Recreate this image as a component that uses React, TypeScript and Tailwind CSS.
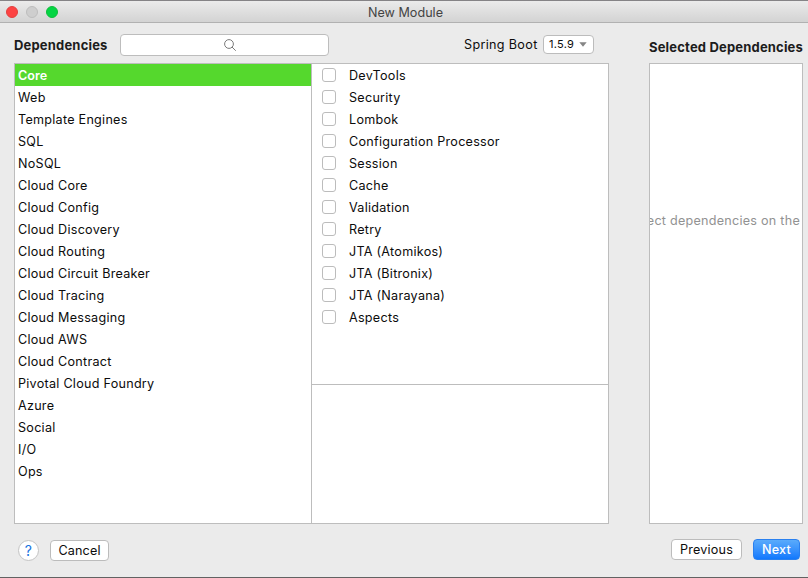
import React from "react";

const categories = [
  "Core", "Web", "Template Engines", "SQL", "NoSQL", "Cloud Core", "Cloud Config",
  "Cloud Discovery", "Cloud Routing", "Cloud Circuit Breaker", "Cloud Tracing",
  "Cloud Messaging", "Cloud AWS", "Cloud Contract", "Pivotal Cloud Foundry",
  "Azure", "Social", "I/O", "Ops",
];

const dependencies = [
  "DevTools", "Security", "Lombok", "Configuration Processor", "Session", "Cache",
  "Validation", "Retry", "JTA (Atomikos)", "JTA (Bitronix)", "JTA (Narayana)", "Aspects",
];

function TitleBar() {
  return (
    <header className="relative flex h-[23px] shrink-0 items-center border-t border-b border-t-[#858386] border-b-[#b1b1b1] bg-linear-to-b from-[#ebebeb] to-[#d3d3d3] pl-1.5">
      <div className="flex gap-2">
        <span className="size-3 rounded-full border border-[#e2413f] bg-[#fd4343]" />
        <span className="size-3 rounded-full border border-[#bdbdbd] bg-[#cecece]" />
        <span className="size-3 rounded-full border border-[#0fbe3b] bg-[#05d544]" />
      </div>
      <h1 className="absolute inset-x-0 pt-0.5 pl-[3px] text-center leading-[22px] tracking-[0.02px] text-[#444]">New Module</h1>
    </header>
  );
}

function SearchField() {
  return (
    <div className="flex h-[22px] w-[209px] items-center justify-center rounded-[4px] border border-[#bdbdbd] bg-white pl-[11px]">
      <svg width="12" height="12" viewBox="0 0 12 12" fill="none" stroke="#7b7b7b" strokeWidth="1">
        <circle cx="5" cy="5" r="4.4" />
        <path d="M8.2 8.2 11.5 11.5" strokeLinecap="round" />
      </svg>
    </div>
  );
}

export default function App() {
  return (
    <div className="flex h-[578px] w-[808px] flex-col overflow-hidden border-b border-[#626262] bg-[#ebebeb] font-['Inter',sans-serif] text-[12.6px] tracking-[0.26px] whitespace-nowrap text-[#0c0c0c]">
      <TitleBar />
      <main className="flex h-[501px] shrink-0">
        <section className="ml-[14px] w-[595px]">
          <div className="flex h-10 items-center">
            <h2 className="w-[106px] pt-[5px] text-[13px] font-bold tracking-[0.18px] text-[#1c1c1c]">Dependencies</h2>
            <div className="pt-1"><SearchField /></div>
            <label className="ml-[135px] w-[79px] pt-[5px] tracking-[0.33px]">Spring Boot</label>
            <button className="mt-[3px] flex h-[19px] w-[51px] items-center justify-between rounded-[4px] border border-[#bcbcbc] bg-white pr-[6px] pl-[5px] text-[11px]">
              1.5.9
              <svg width="8" height="5" viewBox="0 0 8 5"><path d="M.3.3h7.4L4 4.8z" fill="#858585" /></svg>
            </button>
          </div>
          <div className="flex h-[461px] border border-[#bdbdbd] bg-white">
            <ul className="w-[296px]">
              {categories.map((name, i) => (
                <li key={name} className={i === 0 ? "h-[22px] bg-[#55d82d] pl-[3px] leading-[23px] font-semibold tracking-[0.05px] text-white" : "h-[22px] pl-[3px] leading-[23px]"}>
                  {name}
                </li>
              ))}
            </ul>
            <div className="flex flex-1 flex-col border-l border-[#bdbdbd]">
              <ul className="h-[320px]">
                {dependencies.map((name) => (
                  <li key={name} className="flex h-[22px] gap-[13px] pl-[10px] leading-[23px]">
                    <span className="mt-1 size-[14px] rounded-[3px] border border-[#bcbcbc] bg-white" />
                    {name}
                  </li>
                ))}
              </ul>
              <div className="flex-1 border-t border-[#bdbdbd]" />
            </div>
          </div>
        </section>
        <section className="ml-10 w-[154px]">
          <h2 className="flex h-10 items-center pt-[9px] text-[13px] font-bold tracking-[0.18px] text-[#1c1c1c]">Selected Dependencies</h2>
          <div className="flex h-[461px] justify-end overflow-hidden border border-[#bdbdbd] bg-white pt-[148px] pr-[2px] tracking-[0.25px] text-[#929292]">
            <p>Select dependencies on the</p>
          </div>
        </section>
      </main>
      <footer className="flex shrink-0 pt-[15px]">
        <button className="mt-px ml-[18px] size-[21px] rounded-full border border-[#c4c4c4] bg-white text-[14px] leading-[19px] text-[#1671df]">?</button>
        <button className="mt-px ml-[11px] h-[21px] w-[59px] rounded-[4px] border border-[#bcbcbc] bg-white leading-[19px] tracking-[0.15px]">Cancel</button>
        <button className="ml-[562px] h-[21px] w-[71px] rounded-[4px] border border-[#bcbcbc] bg-white leading-[19px] tracking-[0.2px]">Previous</button>
        <button className="ml-[11px] h-[21px] w-[47px] rounded-[4px] border border-[#2a80ef] bg-linear-to-b from-[#5aabfb] to-[#0f78fd] leading-[19px] font-medium text-white">Next</button>
      </footer>
    </div>
  );
}
